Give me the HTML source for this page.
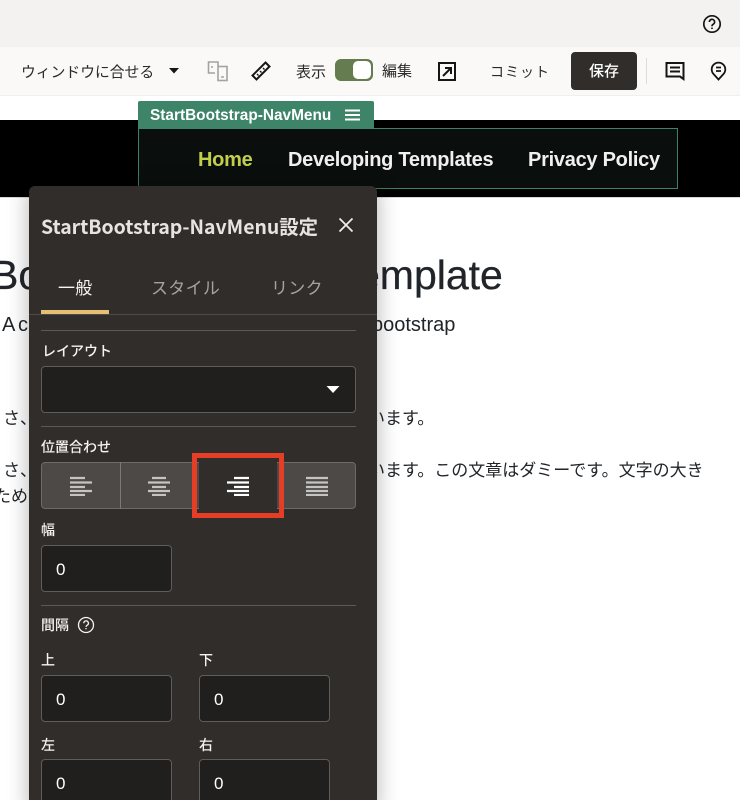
<!DOCTYPE html>
<html lang="ja"><head><meta charset="utf-8">
<style>
*{box-sizing:border-box}
html,body{margin:0;padding:0;width:740px;height:800px;overflow:hidden;background:#fff}
#p{width:740px;height:800px;position:relative;overflow:hidden;background:#fff;font-family:"Liberation Sans","Noto Sans CJK JP",sans-serif;color:#161513}
.a{position:absolute;white-space:nowrap}
.t{font-size:15px;line-height:20px;color:#2b2926}
.b{font-size:17px;line-height:24px;color:#212529}
.in{position:absolute;background:#201f1d;border:1px solid #5f5c59;border-radius:4px;color:#fff;font-size:17px;padding-left:14px;width:131px;height:47px;line-height:47px}
.lb{position:absolute;color:#f5f4f2;font-family:"Noto Sans CJK JP",sans-serif;font-weight:500;font-size:14px;line-height:20px;white-space:nowrap}
.hr{position:absolute;left:12px;width:315px;height:1px;background:#5c5956}
.nav{position:absolute;top:147px;font-size:20px;font-weight:700;line-height:26px;letter-spacing:-.27px;color:#f1f0ee;white-space:nowrap}
.tab{position:absolute;top:88px;font-family:"Noto Sans CJK JP",sans-serif;font-size:17px;letter-spacing:.3px;line-height:26px;white-space:nowrap}
svg{position:absolute;display:block}
</style></head><body><div id="p">
<div class="a" style="left:0;top:0;width:740px;height:47px;background:#f3f2f0"></div>
<div class="a" style="left:0;top:47px;width:740px;height:49px;background:#fbf9f8;border-bottom:1px solid #f1efed"></div>
<svg style="left:702px;top:14px" width="20" height="20" viewBox="0 0 20 20" fill="none" stroke="#161513" stroke-width="1.700"><circle cx="10" cy="10" r="8.200"/><path d="M7.400 8a2.600 2.600 0 1 1 3.900 2.200c-.9.500-1.300 1-1.300 2"/><path d="M10 13.600v1.400"/></svg>

<div class="a t" style="left:21px;top:63px;font-size:14.8px">ウィンドウに合せる</div>
<svg style="left:168px;top:67px" width="12" height="8" viewBox="0 0 12 8"><path d="M1 1h10L6 6.500z" fill="#161513"/></svg>
<svg style="left:207px;top:60px" width="22" height="22" viewBox="0 0 22 22" fill="none" stroke="#a5a3a0" stroke-width="1.600"><path d="M11 6V2H1.500v11H8"/><rect x="11" y="6.500" width="9" height="14"/><path d="M14 17h3M5 6v2"/></svg>
<svg style="left:250px;top:60px" width="22" height="22" viewBox="0 0 22 22" fill="none" stroke="#161513" stroke-width="2"><path d="M15.500 2.500l4 4L6.500 19.500l-4-4z"/><path d="M13 8l1.500 1.500M10 11l1.500 1.500M7 14l1.500 1.500" stroke-width="1.400"/></svg>
<div class="a t" style="left:296px;top:63px">表示</div>
<div class="a" style="left:335px;top:59px;width:38px;height:22px;border-radius:6px;background:#647c4f;border:1px solid #647c4f"></div>
<div class="a" style="left:353px;top:61px;width:18px;height:18px;border-radius:5px;background:#fff"></div>
<div class="a t" style="left:382px;top:62px">編集</div>
<svg style="left:437px;top:61px" width="20" height="20" viewBox="0 0 20 20" fill="none" stroke="#161513" stroke-width="2"><path d="M2 2h16v17H2z"/><path d="M6 15L14 7M8 7h6v6"/></svg>
<div class="a" style="left:490px;top:62px;font-size:14px;line-height:20px;letter-spacing:1px;color:#2b2926">コミット</div>
<div class="a" style="left:571px;top:52px;width:66px;height:38px;background:#312d2a;border-radius:4px;color:#fff;font-size:15px;text-align:center;line-height:40px;font-weight:500">保存</div>
<div class="a" style="left:646px;top:58px;width:1px;height:26px;background:#dfdcd8"></div>
<svg style="left:665px;top:61px" width="20" height="20" viewBox="0 0 20 20" fill="none" stroke="#161513" stroke-width="2"><path d="M1.500 2h17v16l-3.500-2.500H1.500z"/><path d="M5 6.500h10M5 10.500h10"/></svg>
<svg style="left:710px;top:61px" width="17" height="20" viewBox="0 0 17 20" fill="none" stroke="#161513" stroke-width="1.800"><path d="M8.500 18.500L3.500 13A6.800 6.800 0 1 1 13.500 13z"/><path d="M6 6.500h5M6 10h5"/></svg>

<div class="a" style="left:0;top:120px;width:740px;height:77px;background:#000"></div>
<div class="a" style="left:0;top:197px;width:740px;height:1px;background:#d8d8d8"></div>

<div class="a" style="left:138px;top:128px;width:540px;height:61px;background:#0a0f0e;border:1px solid #3d8167"></div>
<div class="a" style="left:138px;top:101px;width:236px;height:28px;background:#3d8469;border-radius:2px 2px 0 0"></div>
<div class="a" style="left:150px;top:107px;font-size:15.4px;font-weight:700;line-height:18px;color:#fff">StartBootstrap-NavMenu</div>
<svg style="left:345px;top:109px" width="15" height="12" viewBox="0 0 15 12" stroke="#fff" stroke-width="2"><path d="M0 1.500h15M0 6h15M0 10.500h15"/></svg>
<div class="nav" style="left:198px;color:#c1cf4b">Home</div>
<div class="nav" style="left:288px">Developing Templates</div>
<div class="nav" style="left:528px">Privacy Policy</div>

<div class="a" style="left:-9px;top:253px;font-size:41px;line-height:44px;color:#212529;-webkit-text-stroke:.3px #212529">Bo</div>
<div class="a" style="left:357px;top:253px;font-size:41px;line-height:44px;color:#212529;-webkit-text-stroke:.3px #212529">emplate</div>
<div class="a" style="left:2px;top:313px;font-size:20px;line-height:24px;color:#212529">A</div>
<div class="a" style="left:18px;top:313px;font-size:20px;line-height:24px;color:#212529">c</div>
<div class="a" style="left:377px;top:313px;width:110px;font-size:20px;line-height:24px;color:#212529;overflow:hidden"><span style="margin-left:-5px">bootstrap</span></div>
<div class="a b" style="left:3px;top:407px">さ、</div>
<div class="a b" style="left:377px;top:407px;width:60px;overflow:hidden"><span style="margin-left:-9px">います。</span></div>
<div class="a b" style="left:3px;top:459px">さ、</div>
<div class="a b" style="left:377px;top:459px;width:340px;overflow:hidden"><span style="margin-left:-9px">います。この文章はダミーです。文字の大き</span></div>
<div class="a b" style="left:-6px;top:485px;width:35px;overflow:hidden">ためにい</div>

<div class="a" style="left:29px;top:186px;width:348px;height:630px;background:#312d2a;border-radius:6px;box-shadow:0 0 22px rgba(0,0,0,.3);overflow:visible">
  <div class="a" style="left:12px;top:27px;font-family:'Noto Sans CJK JP',sans-serif;font-size:19.4px;font-weight:700;line-height:26px;color:#e6e4e2">StartBootstrap-NavMenu設定</div>
  <svg style="left:308px;top:30px" width="18" height="18" viewBox="0 0 18 18" stroke="#f0eeec" stroke-width="1.800"><path d="M2.500 2.500l13 13M15.500 2.500l-13 13"/></svg>
  <div class="tab" style="left:29px;color:#f5f4f2">一般</div>
  <div class="tab" style="left:122px;color:#a5a2a0">スタイル</div>
  <div class="tab" style="left:242px;color:#a5a2a0">リンク</div>
  <div class="a" style="left:12px;top:124px;width:68px;height:4px;background:#e5c073"></div>
  <div class="a" style="left:0;top:128px;width:348px;height:1px;background:#4d4a47"></div>
  <div class="hr" style="top:144px"></div>
  <div class="lb" style="left:13px;top:155px">レイアウト</div>
  <div class="a" style="left:12px;top:180px;width:315px;height:47px;background:#201f1d;border:1px solid #5f5c59;border-radius:4px"></div>
  <svg style="left:297px;top:199px" width="14" height="9" viewBox="0 0 14 9"><path d="M.5 1h13L7 8z" fill="#fff"/></svg>
  <div class="hr" style="top:240px"></div>
  <div class="lb" style="left:12px;top:251px">位置合わせ</div>

  <div class="a" style="left:12px;top:276px;width:315px;height:47px;background:#4c4946;border:1px solid #6d6a67;border-radius:4px"></div>
  <div class="a" style="left:91px;top:276px;width:1px;height:47px;background:#7b7875"></div>
  <div class="a" style="left:170px;top:276px;width:78px;height:47px;background:#312d2a"></div>
  <svg style="left:40px;top:290px" width="24" height="20" viewBox="0 0 24 20" stroke="#c6c4c2" stroke-width="2.300"><path d="M1 2h15M1 6.500h22M1 11h15M1 15h22M1 19h15"/></svg>
  <svg style="left:118px;top:290px" width="24" height="20" viewBox="0 0 24 20" stroke="#c6c4c2" stroke-width="2.300"><path d="M5 2h14M1 6.500h22M5 11h14M1 15h22M5 19h14"/></svg>
  <svg style="left:197px;top:290px" width="24" height="20" viewBox="0 0 24 20" stroke="#fff" stroke-width="2.300"><path d="M8 2h15M1 6.500h22M8 11h15M1 15h22M8 19h15"/></svg>
  <svg style="left:276px;top:290px" width="24" height="20" viewBox="0 0 24 20" stroke="#c6c4c2" stroke-width="2.300"><path d="M1 2h22M1 6.500h22M1 11h22M1 15h22M1 19h22"/></svg>
  <div class="a" style="left:163px;top:267px;width:92px;height:65px;border:5px solid #e63e26"></div>

  <div class="lb" style="left:12px;top:334px">幅</div>
  <div class="in" style="left:12px;top:359px">0</div>
  <div class="hr" style="top:419px"></div>
  <div class="lb" style="left:12px;top:429px">間隔</div>
  <svg style="left:48px;top:430px" width="18" height="18" viewBox="0 0 18 18" fill="none" stroke="#f5f4f2" stroke-width="1.300"><circle cx="9" cy="9" r="7.500"/><path d="M6.800 7.200a2.300 2.300 0 1 1 3.400 2c-.8.500-1.200.9-1.200 1.800M9 12v1.300"/></svg>
  <div class="lb" style="left:12px;top:464px">上</div>
  <div class="lb" style="left:170px;top:464px">下</div>
  <div class="in" style="left:12px;top:489px">0</div>
  <div class="in" style="left:170px;top:489px">0</div>
  <div class="lb" style="left:12px;top:549px">左</div>
  <div class="lb" style="left:170px;top:549px">右</div>
  <div class="in" style="left:12px;top:573px">0</div>
  <div class="in" style="left:170px;top:573px">0</div>
</div>
</div></body></html>
